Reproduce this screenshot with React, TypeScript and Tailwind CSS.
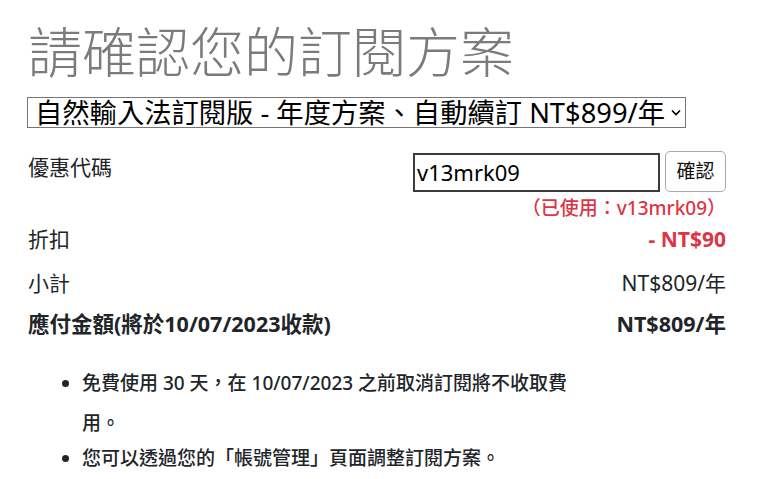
import React from "react";

export default function App() {
  return (
    <div
      className="w-[757px] h-[479px] bg-white overflow-hidden pl-[28px] pr-[31px] pt-[20px] text-[#212529]"
      style={{ fontFamily: '"Noto Sans", "Noto Sans CJK TC", sans-serif' }}
    >
      <h1 className="text-[54px] leading-[65px] font-light text-[#7b7b7b]">
        請確認您的訂閱方案
      </h1>
      <div className="mt-[12px] ml-[-1px] w-[659px] h-[31px] border border-[#767676] flex items-center pl-[7px] pr-[4px] text-black">
        <span className="text-[27.3px] leading-[29px] whitespace-nowrap">
          自然輸入法訂閱版 - 年度方案、自動續訂 NT$899/年
        </span>
        <svg className="ml-auto" width="10" height="7" viewBox="0 0 10 7">
          <path d="M1 1.5 L5 5.5 L9 1.5" fill="none" stroke="#000" strokeWidth="1.6" />
        </svg>
      </div>

      <div className="mt-[23px] flex justify-between h-[41px]">
        <div className="text-[21px] leading-[32px]">優惠代碼</div>
        <div className="flex items-start">
          <div className="mt-[2px] w-[247px] h-[39px] border-2 border-[#3b3b3b] flex items-center px-[2px] text-[22px] text-black">
            v13mrk09
          </div>
          <div className="ml-[5px] w-[61px] h-[41px] border border-[#a8a8a8] rounded-[5px] flex items-center justify-center text-[19px] text-[#111]">
            確認
          </div>
        </div>
      </div>
      <div className="mt-[3px] text-right text-[19px] leading-[26px] font-medium text-[#dc3545]">
        （已使用：v13mrk09）
      </div>

      <div className="mt-[2px] flex justify-between text-[21px] leading-[32px]">
        <span>折扣</span>
        <span className="font-bold text-[#dc3545]">- NT$90</span>
      </div>
      <div className="mt-[12px] flex justify-between text-[21px] leading-[32px]">
        <span>小計</span>
        <span>NT$809/年</span>
      </div>
      <div className="mt-[9px] flex justify-between text-[21.5px] leading-[32px] font-bold">
        <span>應付金額(將於10/07/2023收款)</span>
        <span>NT$809/年</span>
      </div>

      <ul className="mt-[23px] list-disc pl-[54px] text-[19px] font-medium w-[552px]">
        <li className="leading-[40px]">
          免費使用 30 天，在 10/07/2023 之前取消訂閱將不收取費用。
        </li>
        <li className="leading-[30px]">您可以透過您的「帳號管理」頁面調整訂閱方案。</li>
      </ul>
    </div>
  );
}
